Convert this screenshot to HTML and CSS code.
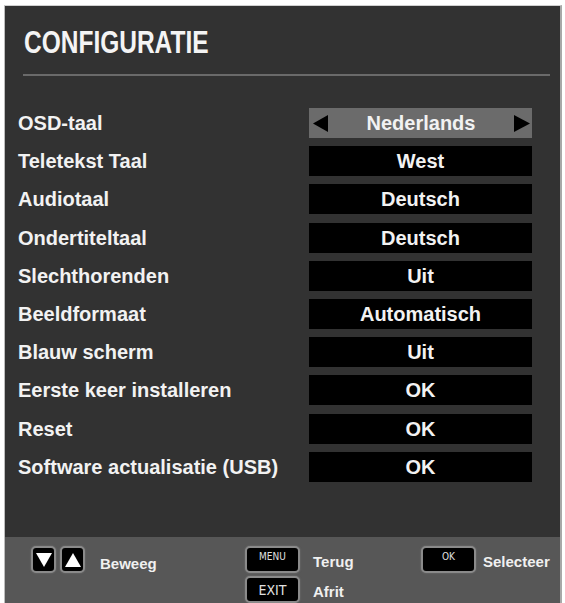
FILE: index.html
```html
<!DOCTYPE html>
<html>
<head>
<meta charset="utf-8">
<link rel="stylesheet" href="styles.css">
</head>
<body>
<div class="panel">
  <div class="main">
    <h1 class="title">CONFIGURATIE</h1>
    <div class="rule"></div>
    <div class="rows">
      <div class="label">OSD-taal</div>
      <div class="value selected">
        <svg class="tri" width="15" height="17" viewBox="0 0 15 17"><path d="M15 0 L0 8.5 L15 17 Z" fill="#000"/></svg>
        <span>Nederlands</span>
        <svg class="tri" width="16" height="17" viewBox="0 0 16 17"><path d="M0 0 L16 8.5 L0 17 Z" fill="#000"/></svg>
      </div>
      <div class="label">Teletekst Taal</div><div class="value">West</div>
      <div class="label">Audiotaal</div><div class="value">Deutsch</div>
      <div class="label">Ondertiteltaal</div><div class="value">Deutsch</div>
      <div class="label">Slechthorenden</div><div class="value">Uit</div>
      <div class="label">Beeldformaat</div><div class="value">Automatisch</div>
      <div class="label">Blauw scherm</div><div class="value">Uit</div>
      <div class="label">Eerste keer installeren</div><div class="value">OK</div>
      <div class="label">Reset</div><div class="value">OK</div>
      <div class="label">Software actualisatie (USB)</div><div class="value">OK</div>
    </div>
  </div>
  <div class="footer">
    <div class="group move">
      <div class="key arrow"><svg width="16" height="14" viewBox="0 0 16 14"><path d="M0 0 H16 L8 14 Z" fill="#fff"/></svg></div>
      <div class="key arrow"><svg width="16" height="14" viewBox="0 0 16 14"><path d="M0 14 H16 L8 0 Z" fill="#fff"/></svg></div>
      <span class="hint">Beweeg</span>
    </div>
    <div class="group pair">
      <div class="key wide small">MENU</div><span class="hint">Terug</span>
      <div class="key wide">EXIT</div><span class="hint">Afrit</span>
    </div>
    <div class="group ok">
      <div class="key wide small">OK</div><span class="hint">Selecteer</span>
    </div>
  </div>
</div>
</body>
</html>
```
FILE: styles.css
```css
html, body {
  margin: 0;
  padding: 0;
  background: #fff;
  overflow: hidden;
  height: 603px;
}
body {
  font-family: "Liberation Sans", Arial, sans-serif;
  font-weight: bold;
  color: #fff;
}
.panel {
  margin: 5px 3px 0 4px;
  width: 555px;
  height: 610px;
  border-left: 1px solid #bdbdbd;
  border-right: 2px solid #a8a8a8;
  border-top: 1px solid #d0d0d0;
  display: flex;
  flex-direction: column;
  background: #323232;
}
.main {
  height: 531px;
  display: flex;
  flex-direction: column;
}
.title {
  margin: 0;
  padding: 20px 0 0 19px;
  font-size: 31px;
  line-height: 34px;
  font-weight: bold;
  color: #f4f4f4;
  transform: scaleX(0.79);
  transform-origin: 19px 0;
}
.rule {
  height: 2px;
  background: #6a6a6a;
  margin: 14px 10px 0 18px;
}
.rows {
  margin-top: 32px;
  padding: 0 28px 0 13px;
  display: grid;
  grid-template-columns: 1fr 223px;
  grid-auto-rows: 30px;
  row-gap: 8.2px;
  align-items: center;
}
.label {
  font-size: 20px;
  line-height: 30px;
  color: #f2f2f2;
}
.value {
  height: 30px;
  background: #000;
  font-size: 20px;
  line-height: 30px;
  text-align: center;
  color: #f2f2f2;
}
.value.selected {
  background: #6b6b6b;
  display: flex;
  align-items: center;
  justify-content: space-between;
  padding: 0 2px 0 4px;
}
.value.selected .tri { display: block; }
.footer {
  flex: 1;
  background: #575757;
  display: grid;
  grid-template-columns: 214px 176px auto;
  padding: 9px 0 0 26px;
  align-items: start;
}
.group { display: flex; align-items: center; }
.move { gap: 4px; }
.move .hint { margin-left: 11px; padding-top: 8px; }
.pair {
  display: grid;
  grid-template-columns: 54px auto;
  column-gap: 14px;
  row-gap: 3px;
  align-items: center;
}
.pair .hint { padding-top: 3px; }
.ok { gap: 7px; }
.ok .hint { padding-top: 3px; }
.key {
  box-sizing: border-box;
  background: #000;
  border: 2px solid #8a8a8a;
  border-radius: 5px;
  box-shadow: 0 0 2px #777;
  display: flex;
  align-items: center;
  justify-content: center;
  color: #e0e0e0;
  font-family: "DejaVu Sans Condensed", "DejaVu Sans", sans-serif;
  font-stretch: condensed;
  font-weight: normal;
}
.arrow { width: 25px; height: 27px; }
.wide { width: 55px; height: 27px; font-size: 14px; }
.small { font-size: 10px; padding-bottom: 7px; }
.hint {
  font-size: 15px;
  color: #f0f0f0;
}
```
